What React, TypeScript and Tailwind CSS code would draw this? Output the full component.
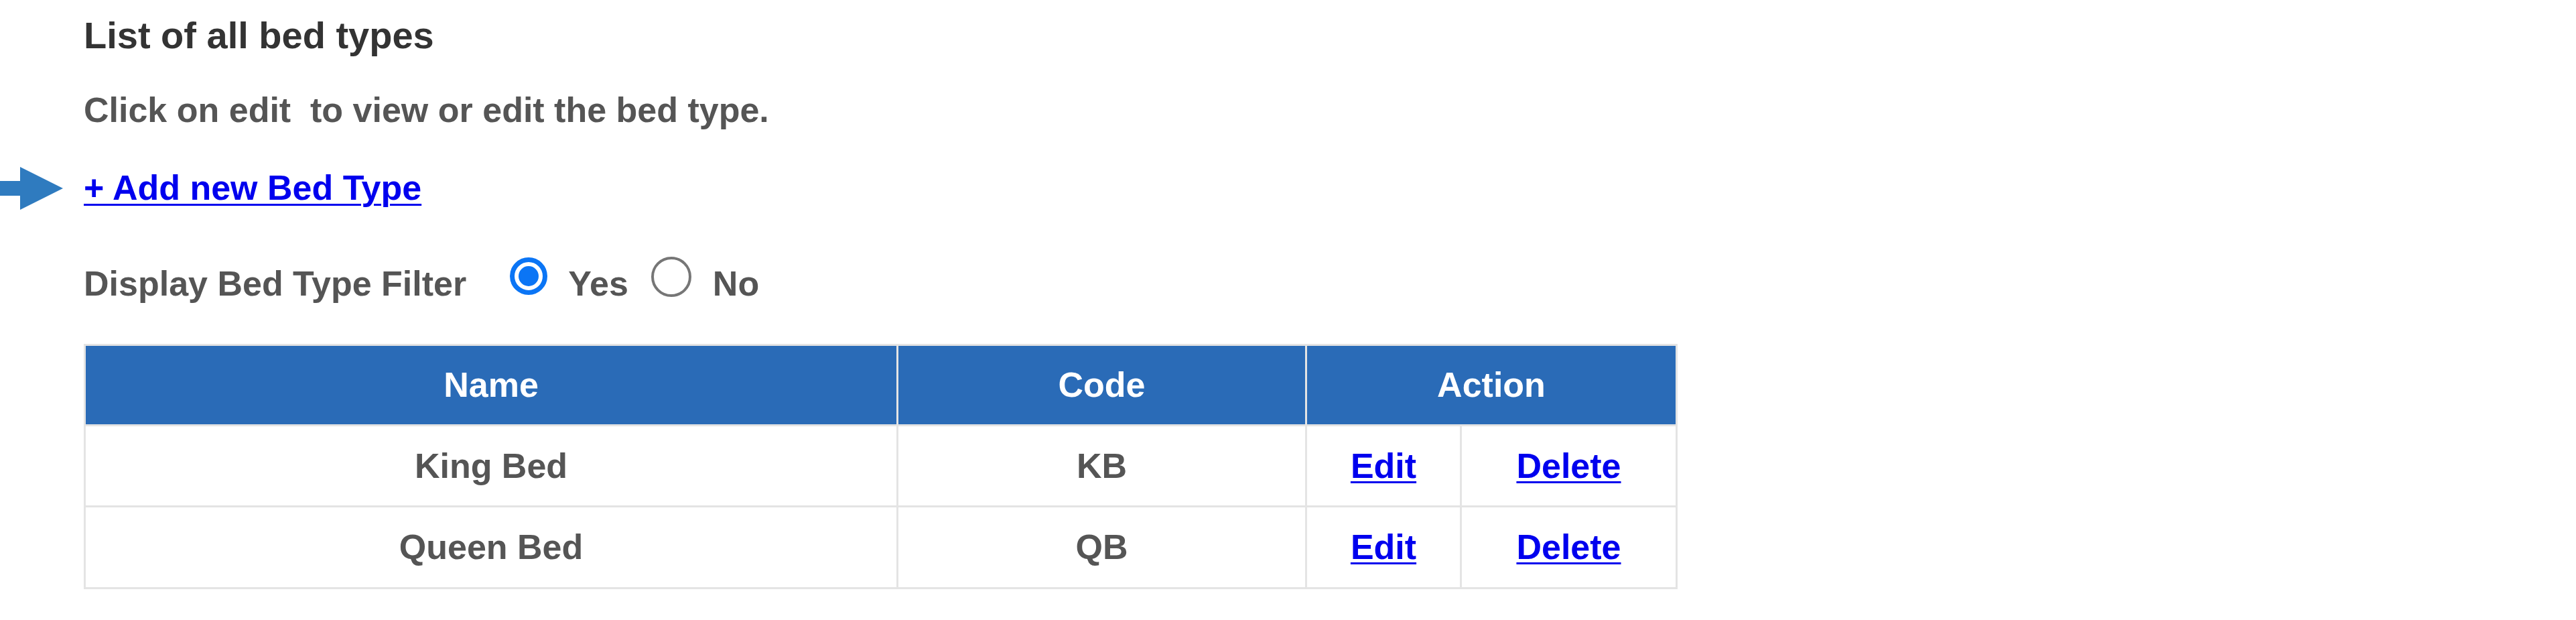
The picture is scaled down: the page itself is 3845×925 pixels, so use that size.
import React from "react";

const font = { fontFamily: '"Liberation Sans", Arial, sans-serif' };

function Arrow() {
  return (
    <svg width="94" height="64" viewBox="0 0 94 64" className="shrink-0">
      <polygon points="0,21 30,21 30,0 94,32 30,64 30,43 0,43" fill="#2f7bbf" />
    </svg>
  );
}

export default function App() {
  const cell = "flex items-center justify-center border-r-[3px] border-b-[3px] border-[#e4e4e4]";
  const link = "text-[#0000ee] underline decoration-[3px] underline-offset-[5px]";
  return (
    <div className="w-[3845px] h-[925px] bg-white" style={font}>
      <div className="pl-[125px] pt-[25px] flex flex-col items-start">
        <h2 className="text-[56px] leading-[56px] font-bold text-[#333333]">List of all bed types</h2>
        <p className="mt-[58px] text-[52px] leading-[51px] font-bold text-[#555555] whitespace-pre">
          Click on edit  to view or edit the bed type.
        </p>
        <div className="mt-[65px] -ml-[125px] h-[51px] flex items-center">
          <Arrow />
          <a href="#" className="ml-[31px] text-[52px] leading-[51px] font-bold text-[#0000ee] underline decoration-[3px] underline-offset-[6px]">
            + Add new Bed Type
          </a>
        </div>
        <div className="mt-[92px] h-[51px] flex items-start text-[52px] leading-[51px] font-bold text-[#555555]">
          <span>Display Bed Type Filter</span>
          <span className="ml-[65px] -mt-[14px] w-[56px] h-[56px] rounded-full border-[7px] border-[#0b75f5] flex items-center justify-center">
            <span className="w-[30px] h-[30px] rounded-full bg-[#0b75f5]" />
          </span>
          <span className="ml-[31px]">Yes</span>
          <span className="ml-[34px] -mt-[15px] w-[60px] h-[60px] rounded-full border-[4px] border-[#767676]" />
          <span className="ml-[32px]">No</span>
        </div>
        <div className="mt-[64px] w-[2379px] border-l-[3px] border-t-[3px] border-[#e4e4e4] grid grid-cols-[1213px_610px_231px_322px] text-[52px] leading-[51px] font-bold">
          <div className={`${cell} h-[120px] bg-[#2a6bb7] text-white`}>Name</div>
          <div className={`${cell} h-[120px] bg-[#2a6bb7] text-white`}>Code</div>
          <div className={`${cell} col-span-2 h-[120px] bg-[#2a6bb7] text-white`}>Action</div>

          <div className={`${cell} h-[121px] text-[#555555]`}>King Bed</div>
          <div className={`${cell} h-[121px] text-[#555555]`}>KB</div>
          <div className={`${cell} h-[121px]`}>
            <a href="#" className={link}>Edit</a>
          </div>
          <div className={`${cell} h-[121px]`}>
            <a href="#" className={link}>Delete</a>
          </div>

          <div className={`${cell} h-[122px] text-[#555555]`}>Queen Bed</div>
          <div className={`${cell} h-[122px] text-[#555555]`}>QB</div>
          <div className={`${cell} h-[122px]`}>
            <a href="#" className={link}>Edit</a>
          </div>
          <div className={`${cell} h-[122px]`}>
            <a href="#" className={link}>Delete</a>
          </div>
        </div>
      </div>
    </div>
  );
}
